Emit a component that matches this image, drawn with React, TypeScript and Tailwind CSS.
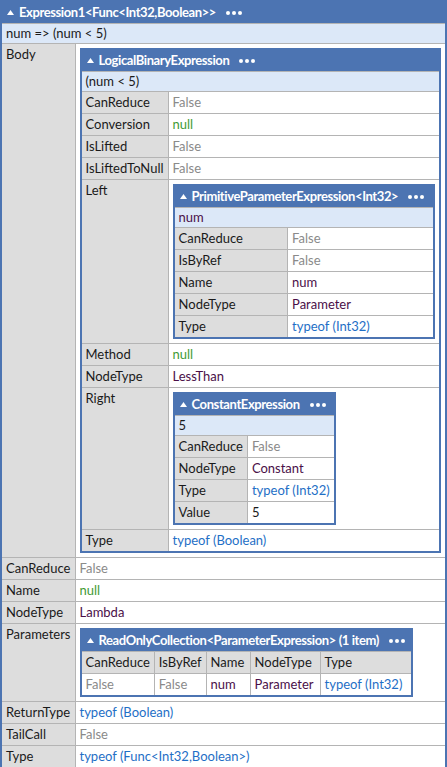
import React from "react";

type Kind = "gray" | "null" | "type" | "enum" | "plain";

const colors: Record<Kind, string> = {
  gray: "text-[#8a8a8a]",
  null: "text-[#3f9a34]",
  type: "text-[#1f6fc6]",
  enum: "text-[#4a0f48]",
  plain: "text-[#1a1a1a]",
};

const th = "border border-[#b4b4b4] bg-[#dddddd] text-left font-normal align-top whitespace-nowrap px-1 py-[3px] leading-[15px] text-[#1a1a1a]";
const td = "border border-[#b4b4b4] bg-white text-left align-top whitespace-nowrap px-1 py-[3px] leading-[15px]";

const Dots = () => (
  <span className="ml-[10px] flex items-center gap-[2px]">
    <span className="block h-[4px] w-[4px] rounded-full bg-white" />
    <span className="block h-[4px] w-[4px] rounded-full bg-white" />
    <span className="block h-[4px] w-[4px] rounded-full bg-white" />
  </span>
);

const Head = ({ title, span = 2 }: { title: string; span?: number }) => (
  <tr>
    <th colSpan={span} className="bg-[#4c74b2] px-1 py-[3px] text-left text-[13px] font-bold leading-[15px] tracking-[-0.4px] text-white">
      <div className="flex items-center whitespace-nowrap">
        <svg width="7" height="5" viewBox="0 0 7 5" className="ml-[1px] mr-[5px]">
          <path d="M3.5 0L7 5H0Z" fill="white" />
        </svg>
        <span>{title}</span>
        <Dots />
      </div>
    </th>
  </tr>
);

const Summary = ({ text, span = 2, kind = "plain" }: { text: string; span?: number; kind?: Kind }) => (
  <tr>
    <td colSpan={span} className={`border border-[#b4b4b4] bg-[#dce8f8] px-1 py-[2px] leading-[15px] ${colors[kind]}`}>
      {text}
    </td>
  </tr>
);

const Row = ({ k, v, kind = "plain", w }: { k: string; v: string; kind?: Kind; w?: string }) => (
  <tr>
    <th className={`${th} ${w ?? ""}`}>{k}</th>
    <td className={`${td} ${colors[kind]}`}>{v}</td>
  </tr>
);

const Nest = ({ k, w, children }: { k: string; w?: string; children: React.ReactNode }) => (
  <tr>
    <th className={`${th} ${w ?? ""}`}>{k}</th>
    <td className="border border-[#b4b4b4] bg-white p-1 align-top">{children}</td>
  </tr>
);

const tbl = "border-collapse border-2 border-[#4c74b2]";

export default function App() {
  return (
    <div className="bg-white text-[13px] text-[#1a1a1a]" style={{ fontFamily: 'Lato, "Noto Sans", sans-serif' }}>
      <table className={`${tbl} w-full`}>
        <tbody>
          <Head title="Expression1<Func<Int32,Boolean>>" />
          <Summary text="num => (num < 5)" />
          <Nest k="Body" w="w-[74px]">
            <table className={`${tbl} w-full`}>
              <tbody>
                <Head title="LogicalBinaryExpression" />
                <Summary text="(num < 5)" />
                <Row k="CanReduce" v="False" kind="gray" w="w-[86px]" />
                <Row k="Conversion" v="null" kind="null" />
                <Row k="IsLifted" v="False" kind="gray" />
                <Row k="IsLiftedToNull" v="False" kind="gray" />
                <Nest k="Left">
                  <table className={`${tbl} w-full`}>
                    <tbody>
                      <Head title="PrimitiveParameterExpression<Int32>" />
                      <Summary text="num" kind="enum" />
                      <Row k="CanReduce" v="False" kind="gray" w="w-[114px]" />
                      <Row k="IsByRef" v="False" kind="gray" />
                      <Row k="Name" v="num" kind="enum" />
                      <Row k="NodeType" v="Parameter" kind="enum" />
                      <Row k="Type" v="typeof (Int32)" kind="type" />
                    </tbody>
                  </table>
                </Nest>
                <Row k="Method" v="null" kind="null" />
                <Row k="NodeType" v="LessThan" kind="enum" />
                <Nest k="Right">
                  <table className={`${tbl} w-[163px]`}>
                    <tbody>
                      <Head title="ConstantExpression" />
                      <Summary text="5" />
                      <Row k="CanReduce" v="False" kind="gray" w="w-[72px]" />
                      <Row k="NodeType" v="Constant" kind="enum" />
                      <Row k="Type" v="typeof (Int32)" kind="type" />
                      <Row k="Value" v="5" />
                    </tbody>
                  </table>
                </Nest>
                <Row k="Type" v="typeof (Boolean)" kind="type" />
              </tbody>
            </table>
          </Nest>
          <Row k="CanReduce" v="False" kind="gray" />
          <Row k="Name" v="null" kind="null" />
          <Row k="NodeType" v="Lambda" kind="enum" />
          <Nest k="Parameters">
            <table className={`${tbl} w-[333px]`}>
              <tbody>
                <Head title="ReadOnlyCollection<ParameterExpression> (1 item)" span={5} />
                <tr>
                  <th className={`${th} w-[73px]`}>CanReduce</th>
                  <th className={`${th} w-[51px]`}>IsByRef</th>
                  <th className={`${th} w-[44px]`}>Name</th>
                  <th className={`${th} w-[70px]`}>NodeType</th>
                  <th className={th}>Type</th>
                </tr>
                <tr>
                  <td className={`${td} ${colors.gray}`}>False</td>
                  <td className={`${td} ${colors.gray}`}>False</td>
                  <td className={`${td} ${colors.enum}`}>num</td>
                  <td className={`${td} ${colors.enum}`}>Parameter</td>
                  <td className={`${td} ${colors.type}`}>typeof (Int32)</td>
                </tr>
              </tbody>
            </table>
          </Nest>
          <Row k="ReturnType" v="typeof (Boolean)" kind="type" />
          <Row k="TailCall" v="False" kind="gray" />
          <Row k="Type" v="typeof (Func<Int32,Boolean>)" kind="type" />
        </tbody>
      </table>
    </div>
  );
}
